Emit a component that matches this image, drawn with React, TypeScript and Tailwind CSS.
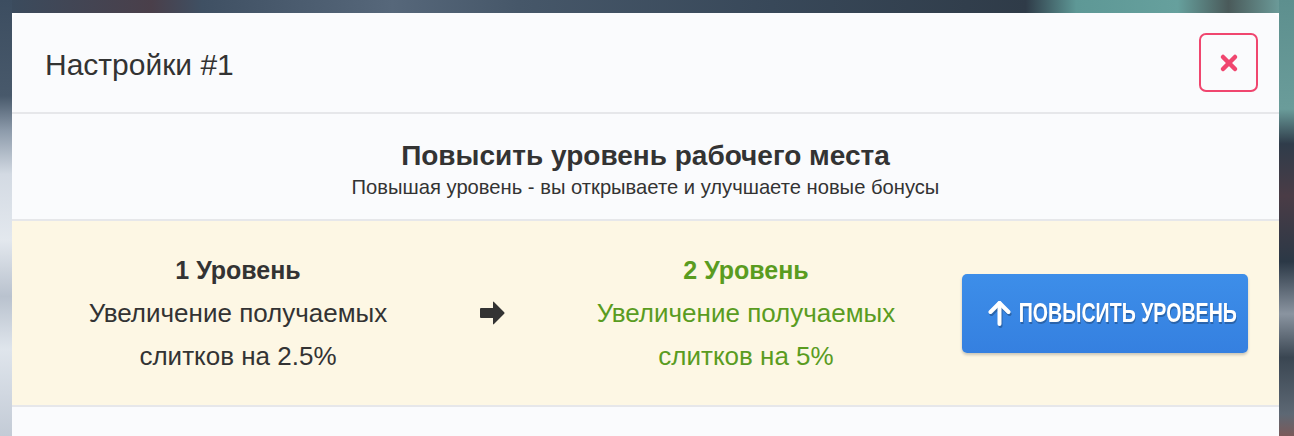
import { X } from "lucide-react";

function ArrowRightSolid() {
  return (
    <svg width="25" height="24" viewBox="0 0 25 24" fill="#333">
      <path d="M1 7 H13 V1.2 Q13 0 14 0.9 L24.2 11.2 Q25 12 24.2 12.8 L14 23.1 Q13 24 13 22.8 V17 H1 Q0 17 0 16 V8 Q0 7 1 7 Z" />
    </svg>
  );
}

function ArrowUpThick() {
  return (
    <svg width="23" height="26" viewBox="0 0 23 26" fill="none" stroke="#fff" strokeWidth="4" strokeLinecap="round" strokeLinejoin="round" className="drop-shadow-[1px_2px_0_rgba(0,0,0,0.25)]">
      <path d="M11.5 24 V3" />
      <path d="M2.5 12 L11.5 3 L20.5 12" />
    </svg>
  );
}

export default function App() {
  return (
    <div className="w-[1294px] h-[436px] overflow-hidden flex font-['Liberation_Sans',sans-serif] text-[#333]">
      <div className="w-[12px] shrink-0 bg-[linear-gradient(180deg,#3c4d60_0%,#48596b_22%,#8d9bab_30%,#d3dae3_40%,#e3e8ee_55%,#b9c2ce_68%,#dfe5ec_80%,#c3cbd6_100%)]" />
      <div className="flex-1 flex flex-col">
        <div className="h-[13px] shrink-0 bg-[linear-gradient(90deg,#3b4b5d_0%,#4a3f4a_11%,#3f5063_15%,#56677a_30%,#465769_40%,#384859_60%,#2f3b48_80%,#5e9896_84%,#66a09d_92%,#4a5a5a_96%,#6b9a98_100%)]" />
        <div className="flex-1 rounded-t-[8px] bg-[#fafbfd] overflow-hidden">
          <div className="flex items-center justify-between h-[101px] pl-[33px] pr-[21px] border-b-2 border-[#e6e7ea]">
            <h2 className="text-[30px] leading-none pt-[4px]">Настройки #1</h2>
            <button className="w-[59px] h-[59px] rounded-[7px] border-2 border-[#f0466f] flex items-center justify-center text-[#f0466f]">
              <X size={24} strokeWidth={4.5} />
            </button>
          </div>
          <div className="h-[107px] flex flex-col items-center pt-[24px] border-b-2 border-[#e6e7ea]">
            <h3 className="text-[28px] font-bold leading-[36px]">Повысить уровень рабочего места</h3>
            <p className="text-[20.2px] leading-[26px]">Повышая уровень - вы открываете и улучшаете новые бонусы</p>
          </div>
          <div className="h-[186px] bg-[#fdf7e4] flex items-center px-[16px] border-b-2 border-[#e6e7ea]">
            <div className="w-[420px] text-center text-[26px] leading-[43px]">
              <div className="font-bold text-[25px]">1 Уровень</div>
              <div>Увеличение получаемых<br />слитков на 2.5%</div>
            </div>
            <div className="w-[88px] flex justify-center">
              <ArrowRightSolid />
            </div>
            <div className="w-[420px] text-center text-[26px] leading-[43px] text-[#5a9c1f]">
              <div className="font-bold text-[25px]">2 Уровень</div>
              <div>Увеличение получаемых<br />слитков на 5%</div>
            </div>
            <button className="ml-[6px] w-[286px] h-[79px] rounded-[5px] bg-[linear-gradient(180deg,#3d8ee9,#3580e0)] shadow-[0_2px_3px_rgba(0,0,0,0.2)] text-white flex items-center justify-center gap-[8px] pl-[14px]">
              <ArrowUpThick />
              <span className="inline-block whitespace-nowrap text-[28px] font-bold leading-none scale-x-[0.7] mx-[-47px] [text-shadow:1px_2px_0_rgba(0,0,0,0.25)]">
                ПОВЫСИТЬ УРОВЕНЬ
              </span>
            </button>
          </div>
        </div>
      </div>
      <div className="w-[15px] shrink-0 bg-[linear-gradient(180deg,#5d8f8e_0%,#6a9c9a_25%,#2f3c4a_33%,#4a3c46_45%,#2b3846_60%,#8a94a0_72%,#3a4652_82%,#5d6874_95%,#7a5a5a_100%)]" />
    </div>
  );
}
